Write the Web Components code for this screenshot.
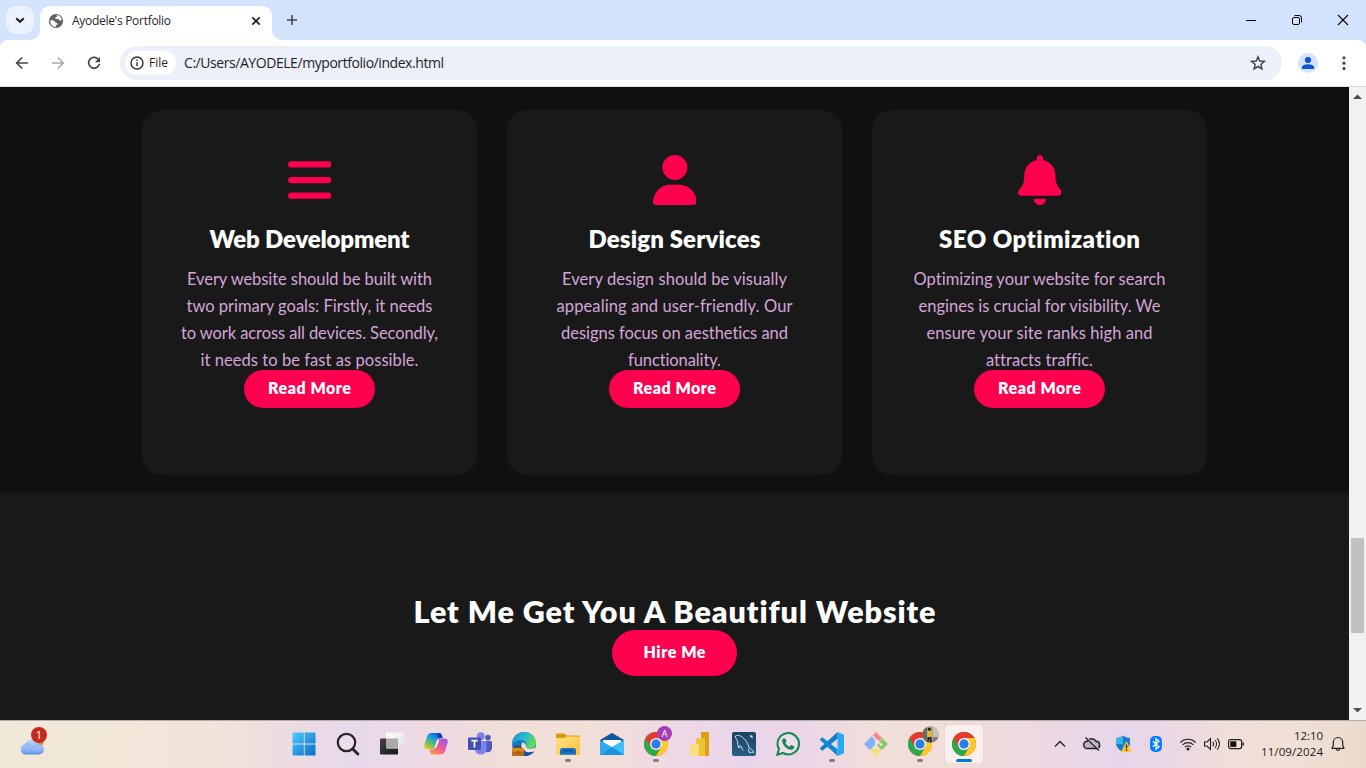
<!DOCTYPE html>
<html lang="en">
<head>
<meta charset="utf-8">
<title>Ayodele's Portfolio</title>
<style>
html,body{margin:0;height:100%;overflow:hidden}
body{font-family:"Open Sans","Noto Sans",sans-serif;color:#1f1f1f}
</style>
</head>
<body>
<desktop-shell>
  <browser-tabs slot="tabs"></browser-tabs>
  <browser-toolbar slot="toolbar"></browser-toolbar>
  <portfolio-page slot="page"></portfolio-page>
  <page-scrollbar slot="scroll"></page-scrollbar>
  <task-bar slot="taskbar"></task-bar>
</desktop-shell>
<script>
function make(name, html, setup) {
  const t = document.createElement('template');
  t.innerHTML = html;
  customElements.define(name, class extends HTMLElement {
    constructor() {
      super();
      this.attachShadow({mode: 'open'}).appendChild(t.content.cloneNode(true));
    }
    connectedCallback() { if (setup) setup(this, this.shadowRoot); }
  });
}

const chromeLogo = `<circle cx="12" cy="12" r="12" fill="#e33b2e"/><path d="M1.6 6A12 12 0 0 0 12 24L17.2 15 12 12 6.8 15z" fill="#2da94f"/><path d="M22.4 6A12 12 0 0 1 12 24L17.2 15 12 6z" fill="#fdc92b"/><path d="M1.6 6A12 12 0 0 1 22.4 6H12L6.8 15z" fill="#e33b2e"/><circle cx="12" cy="12" r="6" fill="#fff"/><circle cx="12" cy="12" r="4.7" fill="#2b7de9"/>`;

// name: [width, height, viewBox, markup]
const icons = {
  chevdown: [16,16,'0 0 16 16','<path d="M4.2 6.2 8 9.8l3.8-3.6" fill="none" stroke="#1f1f1f" stroke-width="2"/>'],
  globe: [16,16,'0 0 16 16','<circle cx="8" cy="8" r="7.1" fill="#5f6368"/><path d="M8.6 2.1c2.8.4 4.7 2.2 5.2 4.6-.7.8-1.4 1.2-2 .8-.8-.5-.8-1.4-2-1.5-1-.1-1.4.3-2.2-.2-.8-.7-.2-1.6.8-1.8.7-.2.6-1.1.2-1.9zM2.3 7.2c1.2 0 2.6.1 3.7.6 1.2.6.7 1.5 1.6 1.9.8.3 1.8.2 1.9 1.1 0 .8-1.1.9-1.3 1.6-.1.5-.1 1-.6 1.5C4.3 13.600 2 11 2.300 7.200z" fill="#fff"/>'],
  close: [16,16,'0 0 16 16','<path d="m4.300 4.300 7.400 7.400m0-7.400-7.400 7.400" stroke="#1f1f1f" stroke-width="1.700"/>'],
  plus: [16,16,'0 0 16 16','<path d="M8 3v10M3 8h10" stroke="#474747" stroke-width="1.600"/>'],
  min: [12,12,'0 0 12 12','<path d="M1 6.500h10" stroke="#000"/>'],
  restore: [12,12,'0 0 12 12','<rect x="1.500" y="3.500" width="7" height="7" rx="1.500" fill="none" stroke="#000"/><path d="M3.500 1.500H8A2.500 2.500 0 0 1 10.500 4v4.500" fill="none" stroke="#000"/>'],
  winclose: [12,12,'0 0 12 12','<path d="m1 1 10 10m0-10L1 11" stroke="#000" stroke-width="1.100"/>'],
  back: [16,16,'0 0 16 16','<path d="M14 8H3M8.200 2.500 2.700 8l5.500 5.500" fill="none" stroke="#474747" stroke-width="1.700"/>'],
  fwd: [16,16,'0 0 16 16','<path d="M2 8h11M7.800 2.500 13.300 8l-5.500 5.500" fill="none" stroke="#aaa" stroke-width="1.700"/>'],
  reload: [16,16,'0 0 16 16','<path d="M12.800 5.200A5.400 5.400 0 1 0 13.300 9" fill="none" stroke="#474747" stroke-width="1.700"/><path d="M14 2v5.200H8.800z" fill="#474747"/>'],
  info: [14,14,'0 0 14 14','<circle cx="7" cy="7" r="6" fill="none" stroke="#303030" stroke-width="1.400"/><path d="M7 6.200v4M7 3.600V5" stroke="#303030" stroke-width="1.400"/>'],
  star: [16,16,'0 0 16 16','<path d="m8 1.800 1.750 4.200 4.650.4-3.500 3 1.050 4.500L8 11.500l-3.950 2.400 1.050-4.500-3.500-3L6.250 6z" fill="none" stroke="#474747" stroke-width="1.500"/>'],
  avatar: [20,20,'0 0 20 20','<circle cx="10" cy="10" r="10" fill="#d3e3fd"/><circle cx="10" cy="7" r="3.100" fill="#0b57d0"/><path d="M4 16v-1.800c0-2 3-3 6-3s6 1 6 3V16z" fill="#0b57d0"/>'],
  dots: [16,16,'0 0 16 16','<g fill="#474747"><circle cx="8" cy="2.800" r="1.600"/><circle cx="8" cy="8.200" r="1.600"/><circle cx="8" cy="13.600" r="1.600"/></g>'],
  bars: [43.75,50,'0 0 448 512','<path fill="#fe004e" d="M0 96C0 78.300 14.300 64 32 64l384 0c17.700 0 32 14.300 32 32s-14.300 32-32 32L32 128C14.300 128 0 113.700 0 96zM0 256c0-17.700 14.300-32 32-32l384 0c17.700 0 32 14.300 32 32s-14.300 32-32 32L32 288c-17.700 0-32-14.300-32-32zM448 416c0 17.700-14.300 32-32 32L32 448c-17.700 0-32-14.300-32-32s14.300-32 32-32l384 0c17.700 0 32 14.300 32 32z"/>'],
  user: [43.75,50,'0 0 448 512','<path fill="#fe004e" d="M224 256A128 128 0 1 0 224 0a128 128 0 1 0 0 256zm-45.700 48C79.800 304 0 383.800 0 482.300C0 498.700 13.300 512 29.700 512l388.600 0c16.400 0 29.700-13.300 29.700-29.700C448 383.800 368.200 304 269.700 304l-91.400 0z"/>'],
  bell: [43.75,50,'0 0 448 512','<path fill="#fe004e" d="M224 0c-17.700 0-32 14.300-32 32l0 19.200C119 66 64 130.600 64 208l0 18.800c0 47-17.300 92.400-48.500 127.600l-7.400 8.300c-8.400 9.400-10.400 22.900-5.300 34.400S19.400 416 32 416l384 0c12.600 0 24-7.400 29.200-18.900s3.100-25-5.300-34.400l-7.400-8.300C401.300 319.200 384 273.900 384 226.800l0-18.800c0-77.400-55-142-128-156.800L256 32c0-17.700-14.300-32-32-32zm45.300 493.300c12-12 18.700-28.300 18.700-45.300l-64 0-64 0c0 17 6.700 33.300 18.700 45.300s28.300 18.700 45.300 18.700s33.300-6.700 45.300-18.700z"/>'],
  up: [9,5,'0 0 9 5','<path d="M0 5 4.500.5 9 5z" fill="#505050"/>'],
  down: [9,5,'0 0 9 5','<path d="M0 0 4.500 4.500 9 0z" fill="#505050"/>'],
  weather: [24,24,'0 0 24 24','<defs><linearGradient id="g" x2="0" y2="1"><stop stop-color="#b7d3fb"/><stop offset=".7" stop-color="#8db5f3"/><stop offset="1" stop-color="#5e8ede"/></linearGradient></defs><circle cx="18" cy="9" r="5.500" fill="#f28a1c"/><path d="M5.500 21.500a5.300 5.300 0 0 1-.3-10.500A7.500 7.500 0 0 1 19 11.500a5 5 0 0 1 0 10z" fill="url(#g)"/><path d="M5 11c2.500-.4 4.500.5 6 2.300M14 15c1-2.500 3-3.700 5-3.500" fill="none" stroke="#7facf2"/>'],
  start: [24,24,'0 0 24 24','<defs><linearGradient id="g" gradientUnits="userSpaceOnUse" x1="0" y1="0" x2="24" y2="24"><stop stop-color="#4cd0fb"/><stop offset="1" stop-color="#0668c8"/></linearGradient></defs><path fill="url(#g)" d="M1.500.5h10.300v11H.5V1.500a1 1 0 0 1 1-1zM12.700.5h9.800a1 1 0 0 1 1 1v10H12.700zM.5 12.500h11.300v11H1.500a1 1 0 0 1-1-1zM12.700 12.500h10.800v10a1 1 0 0 1-1 1h-9.800z"/>'],
  search: [24,24,'0 0 24 24','<circle cx="10.500" cy="10.500" r="8.700" fill="#e9dfed" stroke="#262626" stroke-width="2.200"/><path d="m16.800 17 5 5" stroke="#262626" stroke-width="3" stroke-linecap="round"/>'],
  taskview: [24,24,'0 0 24 24','<defs><linearGradient id="g" x2="1" y2="1"><stop stop-color="#444"/><stop offset="1" stop-color="#161616"/></linearGradient><linearGradient id="h" x2="1" y2="1"><stop stop-color="#fff"/><stop offset="1" stop-color="#dedede"/></linearGradient></defs><rect y="6.500" width="18" height="16" rx="1" fill="url(#g)"/><rect x="6" y=".5" width="18" height="16" rx="1" fill="url(#h)"/><path d="M6 6.500h12v10H7a1 1 0 0 1-1-1z" fill="#aaa"/>'],
  copilot: [24,24,'0 0 24 24','<defs><linearGradient id="a" x1=".8" y1="0" x2=".1" y2="1"><stop stop-color="#0a4ccd"/><stop offset=".35" stop-color="#1798ea"/><stop offset=".65" stop-color="#59c36c"/><stop offset="1" stop-color="#f4c915"/></linearGradient><linearGradient id="b" x1=".8" y1="0" x2=".1" y2="1"><stop stop-color="#9c55e8"/><stop offset=".5" stop-color="#f25a94"/><stop offset="1" stop-color="#fb9b3f"/></linearGradient></defs><path d="M8 1h7c1.700 0 2.400 1 2.900 2.600L18.600 6h-3c-1.600 0-2.300.9-2.700 2.300l-2 6.700c-.5 1.500-1.400 2-2.900 2H3.500C.8 17-.2 15 .5 12.500L3 4.500C3.800 2 5.200 1 8 1z" fill="url(#a)"/><path d="M16 22.500H9c-1.700 0-2.400-1-2.900-2.600L5.400 17.500h3c1.600 0 2.300-.9 2.700-2.300l2-6.700c.5-1.500 1.400-2 2.900-2h4.500c2.700 0 3.700 2 3 4.500L21 19c-.8 2.500-2.200 3.500-5 3.500z" fill="url(#b)"/><path d="M13.200 7.800h2.200l-3 8h-2z" fill="#fff" opacity=".85"/><path d="M14 1h1c1.700 0 2.400 1 2.900 2.600L18.600 6h-3c-.8 0-1.400.2-1.800.7z" fill="#123fae"/>'],
  teams: [24,24,'0 0 24 24','<circle cx="20" cy="5.600" r="2.800" fill="#5159bf"/><circle cx="12.800" cy="4.200" r="3.900" fill="#7b83eb"/><path d="M15 9h8a1 1 0 0 1 1 1v6.500a4.500 4.500 0 0 1-7 3z" fill="#5159bf"/><path d="M7 9h11.500v8.500a5.800 5.800 0 0 1-11.500 0z" fill="#7b83eb"/><rect y="5.500" width="13" height="12.500" rx="1.200" fill="#464eb8"/><path d="M3.300 8.600h6.400M6.500 8.600v6.800" stroke="#fff" stroke-width="1.700"/>'],
  edge: [24,24,'0 0 24 24','<defs><linearGradient id="a" x2="1" y2=".5"><stop stop-color="#1785d5"/><stop offset=".5" stop-color="#25b8d2"/><stop offset="1" stop-color="#63d957"/></linearGradient></defs><circle cx="12" cy="12" r="12" fill="#1176c9"/><path d="M0 12C1 2 9 0 12 0c7 0 12 5 12 10.500 0 4-3 6-6.500 6-3 0-4.500-1-3.500-2.500C15.500 11 13 8 9.500 8 5 8 1.500 10 0 14z" fill="url(#a)"/><path d="M9 13c-.5 5 4 8.500 9 7.500l4-1.500C19 23 15.500 24 12 24 6 24 4 18 9 13z" fill="#1557a8"/><path d="M10.500 10.500c2 0 3.800 2 3.300 3.700-.4 1.500 1.500 2.500 4 2.500 2 0 3.700-.5 4.900-1.500v4c-4 2-12 1.500-13.200-3-.4-2-.2-4.500 1-5.700z" fill="#f2e2dc"/><path d="M11.500 17c2 4 7 4.500 11 2.300C20 23 16 24 12 24z" fill="#0c559f"/><rect y="16" width="12" height="8" fill="#b96a16"/><path d="M0 16h12v3.500H0z" fill="#d88a1e"/><path d="M3.500 16v-1.700h5V16M6 19v2" fill="none" stroke="#70360d" stroke-width="1.300"/>'],
  folder: [24,24,'0 0 24 24','<defs><linearGradient id="a" x2="1" y2="1"><stop stop-color="#ffe18b"/><stop offset="1" stop-color="#fcc12f"/></linearGradient></defs><path d="M0 2.500a1 1 0 0 1 1-1h7.500l2 2H23a1 1 0 0 1 1 1V9H0z" fill="#d99b0c"/><path d="M0 6h8.500l2-1.500H24v17.500a1 1 0 0 1-1 1H1a1 1 0 0 1-1-1z" fill="url(#a)"/><path d="M4 22.800v-4.500A2.300 2.300 0 0 1 6.300 16h11.400a2.300 2.300 0 0 1 2.300 2.300v4.500z" fill="#1672c9"/><path d="M7.500 18.700h9" stroke="#07509b" stroke-width="1.400"/>'],
  mail: [24,24,'0 0 24 24','<path d="M0 8 11.300 1.200q.7-.4 1.400 0L24 8v4H0z" fill="#1057a2"/><path d="M3 8h18v5l-9 5-9-5z" fill="#fff"/><path d="M0 8l12 7 12-7v15H0z" fill="#2ea9ec"/><path d="M3 8h18v1.800L12 15 3 9.800z" fill="#fff"/><path d="M0 23 12 15 24 8v15z" fill="#3bc0f6"/><path d="M0 23h24L12 15z" fill="#1b92de"/>'],
  chrome: [24,24,'0 0 24 24',chromeLogo],
  powerbi: [24,24,'0 0 24 24','<rect x="13" y="0" width="8" height="24" rx=".8" fill="#dba011"/><path d="M8 7a.8.8 0 0 1 .8-.8h7.500a.8.8 0 0 1 .8.800V24H8z" fill="#eec334"/><path d="M2 12.800a.8.8 0 0 1 .8-.8H10a1 1 0 0 1 1 1v11H2.800a.8.8 0 0 1-.8-.8z" fill="#f8df7b"/>'],
  mysql: [24,24,'0 0 24 24','<defs><linearGradient id="a" x2="0" y2="1"><stop stop-color="#194263"/><stop offset="1" stop-color="#286087"/></linearGradient></defs><rect width="24" height="24" rx="2" fill="url(#a)"/><path d="M3.300 4c3-1.500 6 0 8.300 2.300C15 9.500 16.500 13 17 16c2 .8 3.500 2 5 4.200-2 .1-3.500 0-4.500.8l-1-3.800M3.300 4c-.2 2 1.800 3 2.200 5.500.3 2.500.4 4 1.200 6.500l1.700-2.500c1 2 1.500 3.500 3 5M17.500 3.800l3.500 1.700M19.500 3l.5 3" fill="none" stroke="#d5e5ef" stroke-width="1"/>'],
  whatsapp: [24,24,'0 0 24 24','<path d="M1.300 22.700 3 17A10.700 10.700 0 1 1 7 21z" fill="#eeddeb" stroke="#178a51" stroke-width="2.100"/><path d="M8.300 6.300c-.6-.2-2.200.8-2.200 2.600 0 3.300 4.700 8.800 9 8.800 2 0 3.200-1.700 3.200-2.800 0-.6-2.500-1.900-3.100-1.800-.6.100-1 1.500-1.600 1.500-1.200-.1-4-2.700-4-3.700 0-.6.900-1 .9-1.600 0-.7-1.200-2.800-2.200-3z" fill="#178a51"/>'],
  vscode: [24,24,'0 0 24 24','<path d="m17.500 0 6 2.500a1 1 0 0 1 .5.900v17.200a1 1 0 0 1-.5.900l-6 2.500z" fill="#2aaaf3"/><path d="M17.500 0v6.700L3 18.300q-.7.500-1.300 0L.3 17q-.6-.7 0-1.300z" fill="#0f7fcb"/><path d="M17.500 24v-6.700L3 5.700q-.7-.5-1.300 0L.3 7q-.6.700 0 1.300z" fill="#1287d4"/>'],
  git: [24,24,'0 0 24 24','<path d="M12 0 18 6l-2.500 2.500-2.700-.2-4-4.800z" fill="#f58c8b"/><path d="m8 4 4 4.500-1.500 5L6 18 0 12z" fill="#83b2fb"/><path d="m18 6 6 6-6 6-5-4.500z" fill="#85cc65"/><path d="m12 14 5.500 4.500L12 24l-5.500-5.500z" fill="#fadf7b"/><path d="m8.500 4 3.700 4v8M12 8.500l5 4" fill="none" stroke="#f1e0df" stroke-width="1.600"/><circle cx="12.200" cy="8.500" r="1.600" fill="#f1e0df"/><circle cx="12.200" cy="16" r="1.600" fill="#f1e0df"/><circle cx="17" cy="12.500" r="1.600" fill="#f1e0df"/>'],
  photo: [17,17,'0 0 17 17','<defs><clipPath id="c"><circle cx="8.500" cy="8.500" r="8.300"/></clipPath></defs><g clip-path="url(#c)"><path d="M0 0h17v17H0z" fill="#a9a39a"/><path d="M0 0h5v17H0z" fill="#6c6862"/><path d="M11 2h6v9h-6z" fill="#c9c1b4"/><path d="M5.300 5h4.500v6H5.300z" fill="#e1bf22"/><circle cx="7.400" cy="3.200" r="1.700" fill="#352620"/><path d="M5.500 11h4l.6 6H8l-.5-4-.7 4H5z" fill="#2d2d35"/><path d="M11 11h6v6h-6z" fill="#847c75"/></g>'],
  chevup: [14,14,'0 0 14 14','<path d="m2 9.500 5-5 5 5" fill="none" stroke="#222" stroke-width="1.400"/>'],
  cloudoff: [18,16,'0 0 18 16','<path d="M4.300 12.500a3.600 3.600 0 0 1 0-7.200A5 5 0 0 1 13 5.200a3.700 3.700 0 0 1 .8 7.300z" fill="#bbb4bb" stroke="#222" stroke-width="1.500"/><path d="m3.500 1.500 13 12.200" stroke="#eadaea" stroke-width="1.200"/><path d="m2.500 1.500 13.500 13" stroke="#222" stroke-width="1.400"/>'],
  shield: [18,18,'0 0 18 18','<path d="M1 3c3 0 5-1 7-2.500C10 2 12 3 15 3v5c0 4-3 7-7 9-4-2-7-5-7-9z" fill="#1479cf"/><path d="M8 .5V9H1V3c3 0 5-1 7-2.500z" fill="#39b4ee"/><path d="M8 9h7c-.5 4-3.500 6.500-7 8z" fill="#1f90df"/><path d="m11.500 6 5.500 11H6z" fill="#ffc928"/><path d="M11.500 9.500v4M11.500 14.500V16" stroke="#222" stroke-width="1.400"/>'],
  bt: [12,16,'0 0 12 16','<rect width="12" height="16" rx="4.800" fill="#087cff"/><path d="m2.800 5.200 6.200 5.500-3 2.600V2.700l3 2.600-6.200 5.500" fill="none" stroke="#fff" stroke-width="1.200"/>'],
  wifi: [18,16,'0 0 18 16','<g fill="none" stroke="#222" stroke-width="1.200"><path d="M1.300 6.500a10.800 10.800 0 0 1 15.400 0M3.600 8.900a7.600 7.600 0 0 1 10.800 0M5.800 11.200a4.500 4.500 0 0 1 6.400 0"/></g><circle cx="9" cy="13" r="1.500" fill="#222"/>'],
  sound: [18,16,'0 0 18 16','<g fill="none" stroke="#222" stroke-width="1.100"><path d="M1.500 6H4l3.500-3.500v11L4 10H1.500zM9.800 5.800a3.500 3.500 0 0 1 0 4.400M12 4a6 6 0 0 1 0 8M14.200 2.300a8.500 8.500 0 0 1 0 11.400"/></g>'],
  battery: [18,12,'0 0 18 12','<rect x="1.600" y="1.600" width="13" height="9" rx="2" fill="none" stroke="#222" stroke-width="1.200"/><rect x="3.300" y="3.300" width="6" height="5.600" fill="#111"/><path d="M15.500 4.500h1.400v3h-1.400z" fill="#222"/>'],
  notify: [16,16,'0 0 16 16','<path d="M8 1.500a4.700 4.700 0 0 0-4.700 4.700V9.500L2 12.300h12L12.700 9.500V6.200A4.700 4.700 0 0 0 8 1.500zM6.200 12.500a1.800 1.800 0 0 0 3.600 0" fill="none" stroke="#222" stroke-width="1.200" stroke-linejoin="round"/>']
};

make('desktop-shell', `<style>
:host{display:grid;width:1366px;height:768px;grid-template:40px 47px 633px 48px / 1349px 17px;background:#d3e3fd}
::slotted([slot=tabs]),::slotted([slot=toolbar]),::slotted([slot=taskbar]){grid-column:1 / 3}
</style><slot name="tabs"></slot><slot name="toolbar"></slot><slot name="page"></slot><slot name="scroll"></slot><slot name="taskbar"></slot>`);

make('browser-tabs', `<style>
:host{display:flex;box-sizing:border-box;height:40px;padding:6px 17px 0 6px;background:#d3e3fd}
.find{width:28px;height:28px;border-radius:10px;background:#ebf1fd;display:grid;place-items:center;margin-right:6px}
.tab{position:relative;box-sizing:border-box;width:232px;height:34px;background:#fff;border-radius:10px 10px 0 0;display:flex;align-items:center;padding:0 8px;gap:8px;font-size:12px;padding-bottom:5px}
.tab fit-text{flex:1}
.tab::before,.tab::after{content:"";position:absolute;bottom:0;width:10px;height:10px}
.tab::before{left:-10px;background:radial-gradient(circle at 0 0,transparent 9.600px,#fff 10.200px)}
.tab::after{right:-10px;background:radial-gradient(circle at 100% 0,transparent 9.600px,#fff 10.200px)}
.add{margin:6px 0 0 12px}
.win{margin-left:auto;display:flex;gap:34px;padding-top:8px}
</style><div class="find"><ui-icon name="chevdown"></ui-icon></div>
<div class="tab"><ui-icon name="globe"></ui-icon><fit-text w="99">Ayodele's Portfolio</fit-text><ui-icon name="close"></ui-icon></div>
<ui-icon class="add" name="plus"></ui-icon>
<div class="win"><ui-icon name="min"></ui-icon><ui-icon name="restore"></ui-icon><ui-icon name="winclose"></ui-icon></div>`);

make('browser-toolbar', `<style>
:host{display:flex;box-sizing:border-box;height:47px;padding:0 14px 1px;align-items:center;background:#fff;border-radius:8px 8px 0 0;border-bottom:1px solid #dcdcdc}
.nav{display:flex;gap:20px;width:106px}
.box{display:flex;align-items:center;box-sizing:border-box;width:1162px;height:34px;border-radius:17px;background:#ecf0fa;padding:0 16px 0 5px}
.chip{display:flex;align-items:center;gap:5px;box-sizing:border-box;width:51px;height:24px;border-radius:12px;background:#fff;padding-left:5px;font-size:12px;font-weight:500;margin-right:8px}
.url{font-size:14px}
.star{margin-left:auto}
.me{margin:0 18px 0 16px}
</style><div class="nav"><ui-icon name="back"></ui-icon><ui-icon name="fwd"></ui-icon><ui-icon name="reload"></ui-icon></div>
<div class="box"><div class="chip"><ui-icon name="info"></ui-icon><fit-text w="19">File</fit-text></div>
<fit-text class="url" w="260">C:/Users/AYODELE/myportfolio/index.html</fit-text><ui-icon class="star" name="star"></ui-icon></div>
<ui-icon class="me" name="avatar"></ui-icon><ui-icon class="more" name="dots"></ui-icon>`);

make('service-card', `<style>
:host{display:flex;flex-direction:column;align-items:center;box-sizing:border-box;height:365px;padding-top:45px;border-radius:20px;background:#191919}
h3{margin:19px 0 12px;font-size:24px;line-height:30px;font-weight:800;color:#fff}
p{margin:0;color:#d6a5d9;font-size:16.500px;line-height:27px;display:flex;flex-direction:column;align-items:center}
pill-button{margin-top:-4px;width:131px;height:38px;line-height:36px}
</style><ui-icon></ui-icon><h3><slot name="title"></slot></h3><p><slot></slot></p><pill-button><fit-text w="83">Read More</fit-text></pill-button>`,
(el, root) => root.querySelector('ui-icon').setAttribute('name', el.getAttribute('icon')));

make('pill-button', `<style>:host{display:flex;justify-content:center;position:relative;border-radius:23px;background:#fe004e;color:#fff;font-weight:800;font-size:16px}</style><slot></slot>`);

make('portfolio-page', `<style>
:host{display:block;height:633px;overflow:hidden;background:#101010;font-family:Lato,sans-serif}
.cards{box-sizing:border-box;height:406px;padding:23px 142px 0;display:grid;grid-template-columns:repeat(3,335px);gap:30px}
.cta{box-sizing:border-box;height:227px;padding-top:98px;background:#191919;display:flex;flex-direction:column;align-items:center}
h2{margin:0 0 -1px;color:#fff;font-size:30.500px;line-height:40px;font-weight:800}
pill-button{width:125px;height:46px;line-height:44px}
</style><div class="cards">
<service-card icon="bars"><fit-text slot="title" w="200">Web Development</fit-text>
<fit-text w="245">Every website should be built with</fit-text><fit-text w="246">two primary goals: Firstly, it needs</fit-text><fit-text w="257">to work across all devices. Secondly,</fit-text><fit-text w="218">it needs to be fast as possible.</fit-text></service-card>
<service-card icon="user"><fit-text slot="title" w="172">Design Services</fit-text>
<fit-text w="225">Every design should be visually</fit-text><fit-text w="236">appealing and user-friendly. Our</fit-text><fit-text w="227">designs focus on aesthetics and</fit-text><fit-text w="93">functionality.</fit-text></service-card>
<service-card icon="bell"><fit-text slot="title" w="201">SEO Optimization</fit-text>
<fit-text w="252">Optimizing your website for search</fit-text><fit-text w="242">engines is crucial for visibility. We</fit-text><fit-text w="226">ensure your site ranks high and</fit-text><fit-text w="107">attracts traffic.</fit-text></service-card>
</div><div class="cta"><h2><fit-text w="522">Let Me Get You A Beautiful Website</fit-text></h2><pill-button><fit-text w="62">Hire Me</fit-text></pill-button></div>`);

make('page-scrollbar', `<style>
:host{display:flex;flex-direction:column;align-items:center;box-sizing:border-box;height:633px;padding:7px 0;background:#f1f1f1}
.thumb{width:13px;height:95px;background:#c1c1c1;margin-top:439px}
.d{margin-top:auto}
</style><ui-icon name="up"></ui-icon><div class="thumb"></div><ui-icon class="d" name="down"></ui-icon>`);

make('task-app', `<style>
:host{display:grid;place-items:center;position:relative;height:47px}
.tile{display:grid;place-items:center;width:38px;height:38px;border-radius:4px;box-sizing:border-box}
:host([active]) .tile{background:#faf1ef;box-shadow:0 0 1px #bfaeae}
.mark{display:none;position:absolute;bottom:5px;left:19px;width:6px;height:3px;border-radius:2px;background:#85797e}
:host([open]) .mark{display:block}
:host([active]) .mark{display:block;left:14px;width:16px;background:#0078d4}
.over{position:absolute;left:23px;top:6px}
</style><div class="tile"><ui-icon></ui-icon></div><div class="over"><slot></slot></div><div class="mark"></div>`,
(el, root) => root.querySelector('ui-icon').setAttribute('name', el.getAttribute('icon')));

make('task-bar', `<style>
:host{display:grid;box-sizing:border-box;height:48px;grid-template-columns:282px 704px 1fr;border-top:1px solid #b5aeab;color:#1a1a1a;
background:linear-gradient(90deg,#f1e8d8 0,#f1e5d9 200px,#eddce1 290px,#e8d8ec 350px,#eddae3 430px,#f1dfd7 520px,#f2dfd8 590px,#efd8e6 680px,#e9d5ea 740px,#ecd7e7 810px,#f1dfd9 880px,#f1ded9 940px,#eed9df 1020px,#e7d6eb 1120px,#e9d7e7 1160px,#f1ded9 1230px,#f1e0d5 1290px,#eadace)}
.weather{position:relative;padding:12px 0 0 20px}
.badge{position:absolute;left:31px;top:6px;width:16px;height:16px;border-radius:50%;background:#c42b1c;color:#fff;font-size:11px;line-height:16px;text-align:center}
.apps{display:grid;grid-template-columns:repeat(16,44px)}
.apps task-app{top:-1px}
.a{display:block;width:15px;height:15px;border-radius:50%;background:#a63fb5;color:#fff;font-size:9px;line-height:15px;text-align:center}
.photo{margin-left:1px}
.tray{display:grid;grid-template-columns:repeat(4,32px) 4px repeat(3,24px) 75px 30px;padding-left:58px;height:46px;align-items:center;justify-items:center}
.clock{justify-self:end;font-size:11.500px;line-height:16px;display:flex;flex-direction:column;align-items:flex-end;padding-bottom:1px}
</style><div class="weather"><ui-icon name="weather"></ui-icon><span class="badge">1</span></div>
<div class="apps"><task-app icon="start"></task-app><task-app icon="search"></task-app><task-app icon="taskview"></task-app><task-app icon="copilot"></task-app><task-app icon="teams"></task-app><task-app icon="edge"></task-app><task-app icon="folder" open></task-app><task-app icon="mail"></task-app><task-app icon="chrome" open><span class="a">A</span></task-app><task-app icon="powerbi"></task-app><task-app icon="mysql"></task-app><task-app icon="whatsapp"></task-app><task-app icon="vscode" open></task-app><task-app icon="git"></task-app><task-app icon="chrome" open><ui-icon class="photo" name="photo"></ui-icon></task-app><task-app icon="chrome" active></task-app></div>
<div class="tray"><ui-icon name="chevup"></ui-icon><ui-icon name="cloudoff"></ui-icon><ui-icon name="shield"></ui-icon><ui-icon name="bt"></ui-icon><span></span><ui-icon name="wifi"></ui-icon><ui-icon name="sound"></ui-icon><ui-icon name="battery"></ui-icon><div class="clock"><fit-text w="29">12:10</fit-text><fit-text w="62">11/09/2024</fit-text></div><ui-icon name="notify"></ui-icon></div>`);

make('ui-icon', `<style>:host{display:block;flex:none;line-height:0}svg{display:block}</style><div></div>`, (el, root) => {
  const [w, h, vb, body] = icons[el.getAttribute('name')];
  root.querySelector('div').innerHTML = `<svg width="${w}" height="${h}" viewBox="${vb}">${body}</svg>`;
});

// One line of text, tracked so that its advance equals the width in "w".
make('fit-text', `<style>:host{display:block;white-space:nowrap;font-variant-ligatures:none}span{display:inline-block}</style><span><slot></slot></span>`, (el, root) => {
  const s = root.querySelector('span');
  const n = el.textContent.length;
  const gap = (Number(el.getAttribute('w')) - s.getBoundingClientRect().width) / (n - 1);
  s.style.letterSpacing = gap + 'px';
  s.style.marginRight = -gap + 'px';
});
</script>
</body>
</html>
